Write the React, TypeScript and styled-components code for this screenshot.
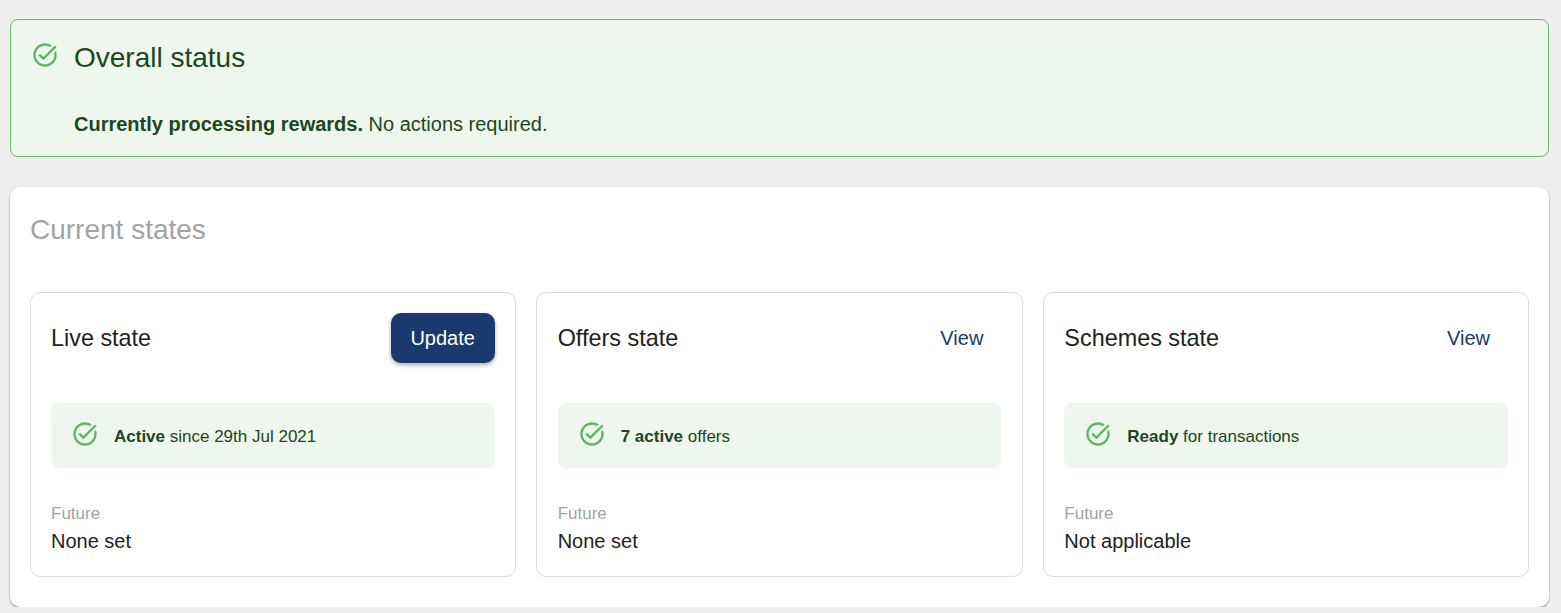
import React from 'react';
import styled, { createGlobalStyle } from 'styled-components';

const GlobalStyle = createGlobalStyle`
  html, body {
    margin: 0;
    padding: 0;
    background: #eeeeee;
    font-family: "Liberation Sans", Arial, sans-serif;
  }
`;

const Page = styled.div`
  box-sizing: border-box;
  padding: 19px 12px 0 10px;
  display: flex;
  flex-direction: column;
  gap: 30px;
`;

const StatusAlert = styled.section`
  box-sizing: border-box;
  height: 138px;
  padding: 20px;
  display: flex;
  gap: 15px;
  background: #edf7ed;
  border: 1px solid #66bb6a;
  border-radius: 8px;
  color: #1e4620;
`;

const IconSvg = styled.svg`
  flex: none;
  width: 28px;
  height: 28px;
  fill: #5cb660;
`;

const AlertIcon = styled.div`
  flex: none;
  height: 28px;
  padding-top: 1px;
`;

const AlertBody = styled.div`
  display: flex;
  flex-direction: column;
`;

const AlertTitle = styled.h1`
  margin: 0;
  font-size: 28px;
  font-weight: 400;
  line-height: 36px;
`;

const AlertMessage = styled.p`
  margin: 36px 0 0;
  font-size: 20px;
  line-height: 24px;
  strong {
    font-weight: 700;
  }
`;

const Panel = styled.section`
  box-sizing: border-box;
  height: 420px;
  padding: 20px;
  background: #ffffff;
  border-radius: 10px;
  box-shadow: 0 1px 2px rgba(0, 0, 0, 0.45);
`;

const PanelTitle = styled.h2`
  margin: 1px 0 0;
  font-size: 28px;
  font-weight: 400;
  line-height: 44px;
  color: #a3a3a3;
`;

const CardRow = styled.div`
  margin-top: 40px;
  display: flex;
  gap: 20px;
`;

const Card = styled.article`
  box-sizing: border-box;
  flex: 1;
  height: 285px;
  padding: 20px;
  border: 1px solid #dddddd;
  border-radius: 10px;
  &:nth-child(2) {
    padding: 20px 21px;
  }
`;

const CardHeader = styled.header`
  height: 50px;
  display: flex;
  align-items: center;
  justify-content: space-between;
`;

const CardTitle = styled.h3`
  margin: 0;
  font-size: 23.4px;
  font-weight: 400;
  color: #222222;
`;

const ActionButton = styled.button<{ $primary?: boolean }>`
  box-sizing: border-box;
  width: ${p => (p.$primary ? '104px' : '79px')};
  height: 50px;
  padding: 0;
  border: 0;
  border-radius: 10px;
  font-family: inherit;
  font-size: 20px;
  background: ${p => (p.$primary ? '#1a396e' : 'transparent')};
  color: ${p => (p.$primary ? '#ffffff' : '#1a396e')};
  box-shadow: ${p => (p.$primary ? '0 2px 4px rgba(0, 0, 0, 0.35)' : 'none')};
`;

const StatusPill = styled.div`
  box-sizing: border-box;
  height: 65px;
  margin-top: 40px;
  padding: 2px 20px 0;
  display: flex;
  align-items: center;
  gap: 15px;
  background: #edf7ed;
  border-radius: 8px;
  color: #1e4620;
  font-size: 17px;
  strong {
    font-weight: 700;
  }
  svg {
    margin-top: -5px;
  }
`;

const FutureLabel = styled.div`
  margin-top: 36px;
  font-size: 17px;
  line-height: 20px;
  color: #a3a3a3;
`;

const FutureValue = styled.div`
  margin-top: 5px;
  font-size: 20px;
  line-height: 24px;
  color: #222222;
`;

const CheckIcon = () => (
  <IconSvg viewBox="0 0 24 24" aria-hidden="true">
    <path d="M22 5.18 10.59 16.6l-4.24-4.24 1.41-1.41 2.83 2.83 10-10L22 5.18zm-2.21 5.04c.13.57.21 1.17.21 1.78 0 4.42-3.58 8-8 8s-8-3.58-8-8 3.58-8 8-8c1.58 0 3.04.46 4.28 1.21l1.44-1.44C16.1 2.67 14.13 2 12 2 6.48 2 2 6.48 2 12s4.48 10 10 10 10-4.48 10-10c0-1.19-.22-2.33-.6-3.39l-1.61 1.61z" />
  </IconSvg>
);

const states = [
  { title: 'Live state', action: 'Update', primary: true, bold: 'Active', rest: ' since 29th Jul 2021', future: 'None set' },
  { title: 'Offers state', action: 'View', primary: false, bold: '7 active', rest: ' offers', future: 'None set' },
  { title: 'Schemes state', action: 'View', primary: false, bold: 'Ready', rest: ' for transactions', future: 'Not applicable' },
];

const App = () => (
  <>
    <GlobalStyle />
    <Page>
      <StatusAlert>
        <AlertIcon>
          <CheckIcon />
        </AlertIcon>
        <AlertBody>
          <AlertTitle>Overall status</AlertTitle>
          <AlertMessage>
            <strong>Currently processing rewards.</strong> No actions required.
          </AlertMessage>
        </AlertBody>
      </StatusAlert>
      <Panel>
        <PanelTitle>Current states</PanelTitle>
        <CardRow>
          {states.map(s => (
            <Card key={s.title}>
              <CardHeader>
                <CardTitle>{s.title}</CardTitle>
                <ActionButton $primary={s.primary}>{s.action}</ActionButton>
              </CardHeader>
              <StatusPill>
                <CheckIcon />
                <span>
                  <strong>{s.bold}</strong>
                  {s.rest}
                </span>
              </StatusPill>
              <FutureLabel>Future</FutureLabel>
              <FutureValue>{s.future}</FutureValue>
            </Card>
          ))}
        </CardRow>
      </Panel>
    </Page>
  </>
);

export default App;
